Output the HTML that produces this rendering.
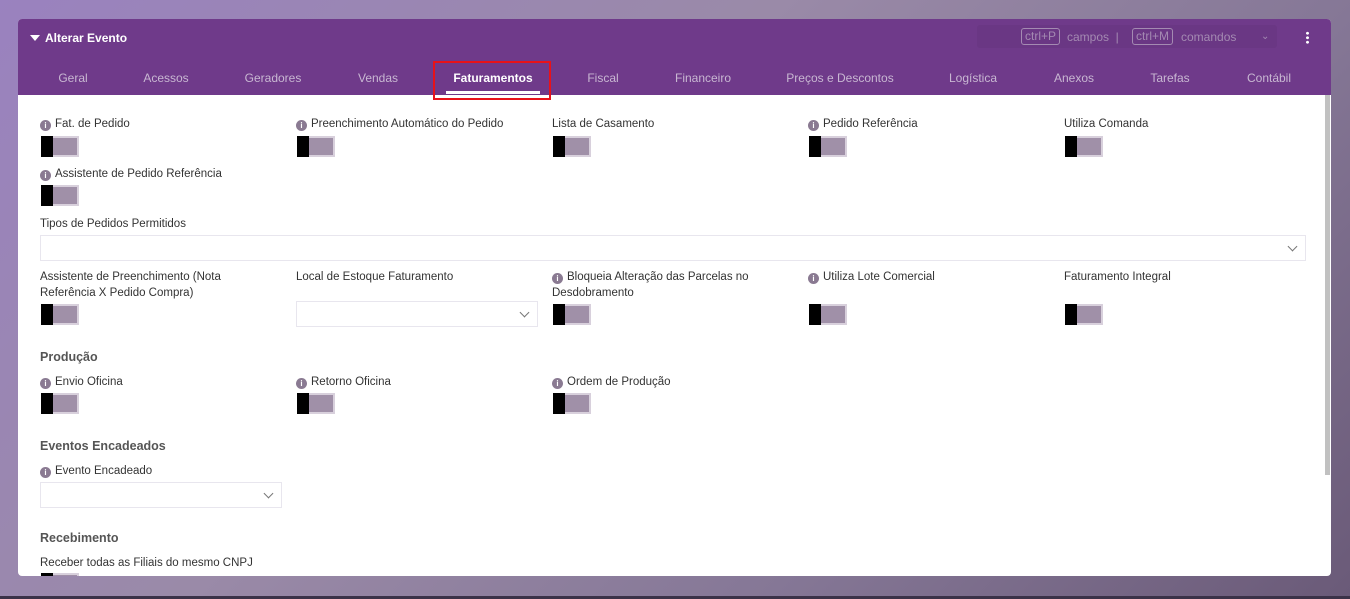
<!DOCTYPE html>
<html><head><meta charset="utf-8"><style>
*{box-sizing:border-box;margin:0;padding:0}
body{width:1350px;height:599px;overflow:hidden;position:relative;font-family:"Liberation Sans",sans-serif;background:linear-gradient(135deg,#9a82bf 0%,#9a8aa8 40%,#857796 70%,#6a5a78 100%)}
.bot{position:absolute;left:0;right:0;top:596px;height:3px;background:#3b3248}
.panel{position:absolute;left:18px;top:19px;width:1313px;height:557px;background:#fff;border-radius:4px;overflow:hidden}
.head{position:absolute;left:0;top:0;width:100%;height:76px;background:#6f3a8a}
.title{position:absolute;left:12px;top:12px;color:#fff;font-size:12px;font-weight:bold}
.title:before{content:"";display:inline-block;border-left:5px solid transparent;border-right:5px solid transparent;border-top:6px solid #fff;margin-right:5px;vertical-align:1px}
.cmd{position:absolute;left:959px;top:6px;width:300px;height:23px;background:#6a3784;border-radius:3px;color:#a48ab2;font-size:12px}
.kbd{position:absolute;top:3px;border:1px solid #a48ab2;border-radius:3px;padding:0 3px;height:17px;line-height:15px}
.tabs span{position:absolute;top:52px;color:#c8b7d2;font-size:12px;transform:translateX(-50%)}
.tabs .act{color:#fff;font-weight:bold}
.ul{position:absolute;left:428px;top:72px;width:94px;height:3px;background:#fff}
.red{position:absolute;left:415px;top:42px;width:118px;height:39px;border:2px solid #e8121a}
.sb{position:absolute;left:1307px;top:76px;width:5px;height:380px;background:#c1c1c1}
.l{position:absolute;font-size:11.5px;color:#333;line-height:16px}
.i:before{content:"i";display:inline-block;width:11px;height:11px;border-radius:50%;background:#8a7a92;color:#fff;font-size:8px;font-weight:bold;text-align:center;line-height:11px;margin-right:4px;vertical-align:-1px}
.t{position:absolute;width:38px;height:21px;background:#a090a8;border:2px solid #d8d0dc}
.t:before{content:"";position:absolute;left:-2px;top:-2px;width:12px;height:21px;background:#000}
.h{position:absolute;font-size:12.5px;font-weight:bold;color:#555}
.sel{position:absolute;height:26px;border:1px solid #e8e6ee;background:#fff}
.sel:after{content:"";position:absolute;right:9px;top:7px;width:6px;height:6px;border-right:1.5px solid #777;border-bottom:1.5px solid #777;transform:rotate(45deg)}
</style></head><body>
<div class="panel">
<div class="head">
<div class="title">Alterar Evento</div>
<div class="cmd"><span class="kbd" style="left:44px">ctrl+P</span><span style="position:absolute;left:90px;top:5px">campos &nbsp;|</span><span class="kbd" style="left:155px">ctrl+M</span><span style="position:absolute;left:204px;top:5px">comandos</span><span style="position:absolute;left:284px;top:6px;font-size:10px">&#8964;</span></div>
<div style="position:absolute;left:1288px;top:12px;width:3px;height:13px;background:radial-gradient(circle,#fff 1.3px,transparent 1.6px) 0 0/3px 4.5px"></div>
<div class="tabs">
<span style="left:55px">Geral</span><span style="left:148px">Acessos</span><span style="left:255px">Geradores</span><span style="left:360px">Vendas</span><span class="act" style="left:475px">Faturamentos</span><span style="left:585px">Fiscal</span><span style="left:685px">Financeiro</span><span style="left:822px">Preços e Descontos</span><span style="left:955px">Logística</span><span style="left:1056px">Anexos</span><span style="left:1152px">Tarefas</span><span style="left:1251px">Contábil</span>
</div>
<div class="ul"></div>
</div>
<div class="red"></div>
<div class="sb"></div>

<div class="l i" style="left:22px;top:97px">Fat. de Pedido</div><div class="t" style="left:23px;top:117px"></div>
<div class="l i" style="left:278px;top:97px">Preenchimento Automático do Pedido</div><div class="t" style="left:279px;top:117px"></div>
<div class="l" style="left:534px;top:97px">Lista de Casamento</div><div class="t" style="left:535px;top:117px"></div>
<div class="l i" style="left:790px;top:97px">Pedido Referência</div><div class="t" style="left:791px;top:117px"></div>
<div class="l" style="left:1046px;top:97px">Utiliza Comanda</div><div class="t" style="left:1047px;top:117px"></div>
<div class="l i" style="left:22px;top:147px">Assistente de Pedido Referência</div><div class="t" style="left:23px;top:166px"></div>
<div class="l" style="left:22px;top:197px">Tipos de Pedidos Permitidos</div>
<div class="sel" style="left:22px;top:216px;width:1266px"></div>
<div class="l" style="left:22px;top:250px;width:220px">Assistente de Preenchimento (Nota Referência X Pedido Compra)</div><div class="t" style="left:23px;top:285px"></div>
<div class="l" style="left:278px;top:250px">Local de Estoque Faturamento</div>
<div class="sel" style="left:278px;top:282px;width:242px"></div>
<div class="l i" style="left:534px;top:250px;width:220px">Bloqueia Alteração das Parcelas no Desdobramento</div><div class="t" style="left:535px;top:285px"></div>
<div class="l i" style="left:790px;top:250px">Utiliza Lote Comercial</div><div class="t" style="left:791px;top:285px"></div>
<div class="l" style="left:1046px;top:250px">Faturamento Integral</div><div class="t" style="left:1047px;top:285px"></div>
<div class="h" style="left:22px;top:331px">Produção</div>
<div class="l i" style="left:22px;top:355px">Envio Oficina</div><div class="t" style="left:23px;top:374px"></div>
<div class="l i" style="left:278px;top:355px">Retorno Oficina</div><div class="t" style="left:279px;top:374px"></div>
<div class="l i" style="left:534px;top:355px">Ordem de Produção</div><div class="t" style="left:535px;top:374px"></div>
<div class="h" style="left:22px;top:420px">Eventos Encadeados</div>
<div class="l i" style="left:22px;top:444px">Evento Encadeado</div>
<div class="sel" style="left:22px;top:463px;width:242px"></div>
<div class="h" style="left:22px;top:512px">Recebimento</div>
<div class="l" style="left:22px;top:536px">Receber todas as Filiais do mesmo CNPJ</div><div class="t" style="left:23px;top:554px"></div>
</div>
<div class="bot"></div>
</body></html>
